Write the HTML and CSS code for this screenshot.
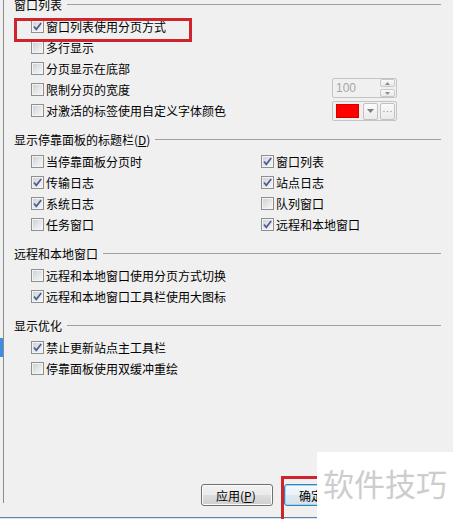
FILE: index.html
```html
<!DOCTYPE html>
<html lang="zh-CN">
<head>
<meta charset="utf-8">
<title>选项</title>
<link rel="stylesheet" href="styles.css">
</head>
<body>
<div class="dialog">
  <div class="main">
    <div class="side"><div class="side-mark"></div></div>
    <div class="panel">
      <div class="inner">
        <section class="group">
          <div class="group-title"><span>窗口列表</span><i class="rule"></i></div>
          <div class="rows">
            <div class="row"><label class="opt"><span class="cb"><svg viewBox="0 0 11 11" width="11" height="11"><path d="M2 5.5 L4.3 8.3 L9.2 2" fill="none" stroke="#4a5c98" stroke-width="1.7"/></svg></span>窗口列表使用分页方式</label></div>
            <div class="row"><label class="opt"><span class="cb"></span>多行显示</label></div>
            <div class="row"><label class="opt"><span class="cb"></span>分页显示在底部</label></div>
            <div class="row"><label class="opt opt-wide"><span class="cb"></span>限制分页的宽度</label>
              <div class="spin">
                <span class="spin-val">100</span>
                <span class="spin-btns">
                  <span class="spin-btn"><svg viewBox="0 0 5 3" width="5" height="3"><path d="M0 3 L2.5 0 L5 3 Z" fill="#8c8c8c"/></svg></span>
                  <span class="spin-btn"><svg viewBox="0 0 5 3" width="5" height="3"><path d="M0 0 L2.5 3 L5 0 Z" fill="#8c8c8c"/></svg></span>
                </span>
              </div>
            </div>
            <div class="row"><label class="opt opt-wide"><span class="cb"></span>对激活的标签使用自定义字体颜色</label>
              <div class="colorpick">
                <span class="swatch"></span>
                <span class="cp-btn"><svg viewBox="0 0 7 4" width="7" height="4"><path d="M0 0 L3.5 4 L7 0 Z" fill="#7d7d7d"/></svg></span>
                <span class="cp-btn"><svg viewBox="0 0 9 3" width="9" height="3"><circle cx="1" cy="1.5" r="0.7" fill="#9a9a9a"/><circle cx="4.5" cy="1.5" r="0.7" fill="#9a9a9a"/><circle cx="8" cy="1.5" r="0.7" fill="#9a9a9a"/></svg></span>
              </div>
            </div>
          </div>
        </section>

        <section class="group">
          <div class="group-title"><span>显示停靠面板的标题栏(<u>D</u>)</span><i class="rule"></i></div>
          <div class="rows grid">
            <div class="row"><label class="opt"><span class="cb"></span>当停靠面板分页时</label></div>
            <div class="row"><label class="opt"><span class="cb"><svg viewBox="0 0 11 11" width="11" height="11"><path d="M2 5.5 L4.3 8.3 L9.2 2" fill="none" stroke="#4a5c98" stroke-width="1.7"/></svg></span>窗口列表</label></div>
            <div class="row"><label class="opt"><span class="cb"><svg viewBox="0 0 11 11" width="11" height="11"><path d="M2 5.5 L4.3 8.3 L9.2 2" fill="none" stroke="#4a5c98" stroke-width="1.7"/></svg></span>传输日志</label></div>
            <div class="row"><label class="opt"><span class="cb"><svg viewBox="0 0 11 11" width="11" height="11"><path d="M2 5.5 L4.3 8.3 L9.2 2" fill="none" stroke="#4a5c98" stroke-width="1.7"/></svg></span>站点日志</label></div>
            <div class="row"><label class="opt"><span class="cb"><svg viewBox="0 0 11 11" width="11" height="11"><path d="M2 5.5 L4.3 8.3 L9.2 2" fill="none" stroke="#4a5c98" stroke-width="1.7"/></svg></span>系统日志</label></div>
            <div class="row"><label class="opt"><span class="cb"></span>队列窗口</label></div>
            <div class="row"><label class="opt"><span class="cb"></span>任务窗口</label></div>
            <div class="row"><label class="opt"><span class="cb"><svg viewBox="0 0 11 11" width="11" height="11"><path d="M2 5.5 L4.3 8.3 L9.2 2" fill="none" stroke="#4a5c98" stroke-width="1.7"/></svg></span>远程和本地窗口</label></div>
          </div>
        </section>

        <section class="group">
          <div class="group-title"><span>远程和本地窗口</span><i class="rule"></i></div>
          <div class="rows">
            <div class="row"><label class="opt"><span class="cb"></span>远程和本地窗口使用分页方式切换</label></div>
            <div class="row"><label class="opt"><span class="cb"><svg viewBox="0 0 11 11" width="11" height="11"><path d="M2 5.5 L4.3 8.3 L9.2 2" fill="none" stroke="#4a5c98" stroke-width="1.7"/></svg></span>远程和本地窗口工具栏使用大图标</label></div>
          </div>
        </section>

        <section class="group">
          <div class="group-title"><span>显示优化</span><i class="rule"></i></div>
          <div class="rows">
            <div class="row"><label class="opt"><span class="cb"><svg viewBox="0 0 11 11" width="11" height="11"><path d="M2 5.5 L4.3 8.3 L9.2 2" fill="none" stroke="#4a5c98" stroke-width="1.7"/></svg></span>禁止更新站点主工具栏</label></div>
            <div class="row"><label class="opt"><span class="cb"></span>停靠面板使用双缓冲重绘</label></div>
          </div>
        </section>
      </div>
    </div>
  </div>

  <div class="footer">
    <button class="btn">应用(<u>P</u>)</button>
    <button class="btn btn-default">确定</button>
  </div>
  <div class="statusline"></div>

  <div class="mark mark-top"></div>
  <div class="mark mark-ok"></div>
  <div class="watermark">软件技巧</div>
</div>
</body>
</html>
```

FILE: styles.css
```css
* {
  box-sizing: border-box;
  margin: 0;
  padding: 0;
}

html,
body {
  width: 453px;
  height: 519px;
  overflow: hidden;
}

body {
  background: #f0f0f0;
  color: #000;
  font: 12px/17px "Noto Sans CJK SC", "Microsoft YaHei", sans-serif;
}

.dialog {
  position: relative;
  width: 453px;
  height: 519px;
  display: flex;
  flex-direction: column;
  overflow: hidden;
}

.main {
  display: flex;
  height: 503px;
  flex: none;
}

.side {
  width: 3px;
  padding-top: 338px;
}

.side-mark {
  width: 3px;
  height: 19px;
  background: #3a8ee6;
}

.panel {
  width: 438px;
  border-left: 1px solid #8c8c8c;
  padding-left: 10px;
}

.inner {
  margin-top: -6px;
}

.group + .group {
  margin-top: 7px;
}

.group-title {
  display: flex;
  align-items: center;
  gap: 5px;
  height: 22px;
  white-space: nowrap;
}

.group:first-child .group-title {
  height: 20px;
}

.group-title u,
.btn u {
  text-decoration: underline;
  text-underline-offset: 1px;
}

.rule {
  flex: 1;
  height: 0;
  border-top: 1px solid #a0a0a0;
}

.rows {
  padding-top: 1px;
  padding-left: 17px;
}

.group:first-child .rows {
  padding-top: 2px;
}

.grid {
  display: grid;
  grid-template-columns: 230px 1fr;
  grid-auto-rows: 21px;
}

.row {
  display: flex;
  align-items: center;
  height: 21px;
}

.opt {
  display: flex;
  align-items: center;
  gap: 2px;
  white-space: nowrap;
}

.opt-wide {
  flex: 0 0 301px;
}

.cb {
  width: 13px;
  height: 13px;
  flex: none;
  border: 1px solid #8e8f8f;
  background: linear-gradient(135deg, #cbcdd0 0%, #e6e7e8 55%, #f8f8f8 100%);
  box-shadow: inset 0 0 0 1px #f4f4f4;
  display: flex;
  align-items: center;
  justify-content: center;
}

.cb svg {
  display: block;
}

/* spinner */
.spin {
  width: 65px;
  height: 20px;
  margin-bottom: 3px;
  border: 1px solid #c4c4c4;
  border-radius: 2px;
  display: flex;
  align-items: center;
  justify-content: space-between;
  padding: 0 1px 0 3px;
}

.spin-val {
  color: #a6a6a6;
  font: 12px/14px "Liberation Sans", Arial, sans-serif;
}

.spin-btns {
  display: flex;
  flex-direction: column;
  gap: 2px;
}

.spin-btn {
  width: 15px;
  height: 8px;
  border: 1px solid #c9c9c9;
  border-radius: 2px;
  background: linear-gradient(#fafafa, #e8e8e8);
  display: flex;
  align-items: center;
  justify-content: center;
}

.spin-btn svg,
.cp-btn svg {
  display: block;
}

/* color picker */
.colorpick {
  width: 65px;
  height: 20px;
  margin-top: 1px;
  border: 1px solid #c4c4c4;
  border-radius: 2px;
  display: flex;
  align-items: center;
  padding: 0 1px 0 3px;
  gap: 2px;
}

.swatch {
  width: 23px;
  height: 14px;
  margin-right: 2px;
  background: #ff0000;
  border: 1px solid #d40000;
}

.cp-btn {
  width: 15px;
  height: 17px;
  border: 1px solid #c2c2c2;
  border-radius: 2px;
  background: linear-gradient(#fafafa, #ebebeb);
  display: flex;
  align-items: center;
  justify-content: center;
}

/* footer buttons */
.footer {
  flex: none;
  height: 33px;
  margin-top: -19px;
  padding-left: 201px;
  display: flex;
  align-items: flex-start;
  gap: 11px;
}

.btn {
  width: 72px;
  height: 22px;
  border: 1px solid #707070;
  border-radius: 3px;
  background: linear-gradient(#f2f2f2 0%, #ebebeb 48%, #dddddd 52%, #cfcfcf 100%);
  box-shadow: inset 0 0 0 1px #fbfbfb;
  font: 12px/17px "Noto Sans CJK SC", "Microsoft YaHei", sans-serif;
  color: #000;
  display: flex;
  align-items: center;
  justify-content: flex-start;
  padding-left: 14px;
}

.btn-default {
  border-color: #3c7fb1;
  box-shadow: inset 0 0 0 1px #9fd6f3;
  background: linear-gradient(#f4f9fc 0%, #eaf3f8 48%, #dde9f0 52%, #d2e2ec 100%);
}

.statusline {
  flex: 1;
  border-top: 1px solid #62809f;
  background: #dde5ee;
}

/* annotations drawn over the screenshot */
.mark {
  position: absolute;
  border: 3px solid #d0242c;
}

.mark-top {
  left: 14px;
  top: 18px;
  width: 178px;
  height: 24px;
}

.mark-ok {
  left: 281px;
  top: 476px;
  width: 60px;
  height: 60px;
}

.watermark {
  position: absolute;
  left: 317px;
  top: 452px;
  width: 136px;
  height: 67px;
  background: #fff;
  color: #cdcdcd;
  font: 31px/31px "Noto Sans CJK SC", "Microsoft YaHei", sans-serif;
  padding: 15px 0 0 6px;
  white-space: nowrap;
}
```
